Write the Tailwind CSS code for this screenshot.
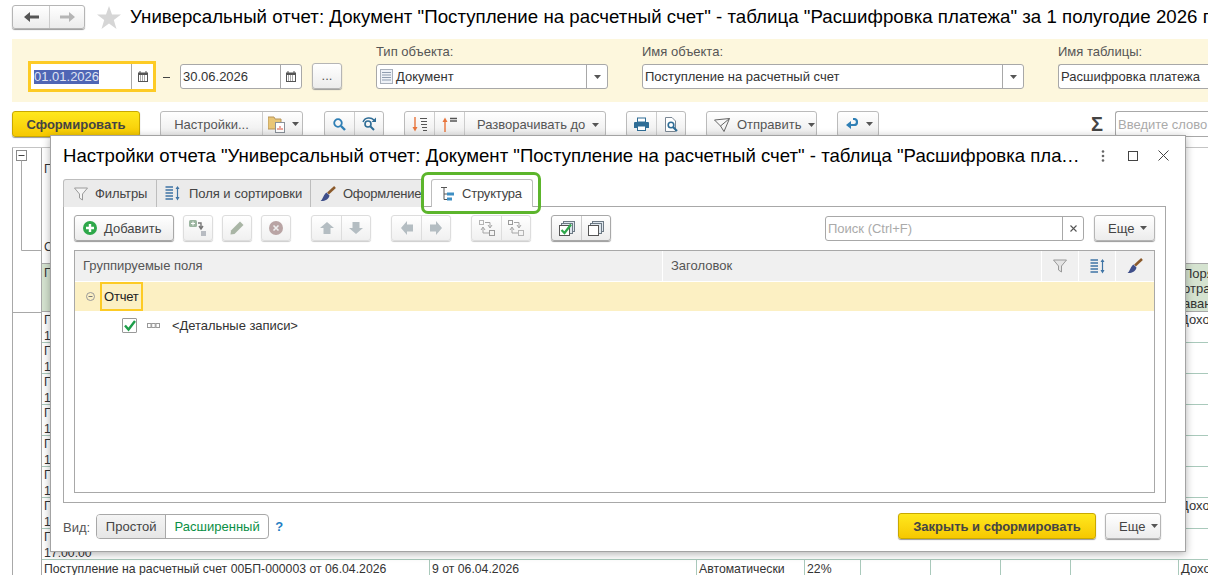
<!DOCTYPE html>
<html lang="ru">
<head>
<meta charset="UTF-8">
<title>Универсальный отчет</title>
<script src="https://cdn.jsdelivr.net/npm/@tailwindcss/browser@4"></script>
</head>
<body class="bg-white">
<div class="relative w-[1208px] h-[575px] overflow-hidden bg-white font-['Liberation_Sans',Arial,sans-serif] text-[13px] text-[#333]">

  <!-- Заголовок -->
  <div class="flex items-center h-[39px] pl-3 pb-[5px]">
    <div class="flex w-[73px] h-[24px] shrink-0 rounded-[3px] border border-[#b5b5b5] bg-linear-to-b from-white to-[#ececec] shadow-[0_1px_1px_#999]">
      <div class="w-[37px] flex items-center justify-center border-r border-[#ccc]">
        <svg width="15" height="10" viewBox="0 0 15 10"><path d="M0 5 L6 0 V3.500 H15 V6.500 H6 V10 Z" fill="#555"/></svg>
      </div>
      <div class="flex-1 flex items-center justify-center">
        <svg width="15" height="10" viewBox="0 0 15 10"><path d="M15 5 L9 0 V3.500 H0 V6.500 H9 V10 Z" fill="#b5b5b5"/></svg>
      </div>
    </div>
    <svg class="ml-[12px] shrink-0" width="24" height="23" viewBox="0 0 24 23"><path d="M12 0 L15 8.500 H24 L16.800 14 L19.500 23 L12 17.500 L4.500 23 L7.200 14 L0 8.500 H9 Z" fill="#d6d6d6"/></svg>
    <div class="ml-[9px] whitespace-nowrap text-[18.67px] tracking-[0.03px] text-black">Универсальный отчет: Документ "Поступление на расчетный счет" - таблица "Расшифровка платежа" за 1 полугодие 2026 г.</div>
  </div>

  <!-- Параметры отчета -->
  <div class="ml-3 h-[63px] bg-[#fdf7dd] flex items-end pb-[10px] pl-4">
    <div class="w-[128px] h-[31px] border-[3px] border-[#fdcb25] bg-white flex items-center shrink-0">
      <div class="flex-1 pl-[3px] h-[25px] flex items-center"><span class="bg-[#4f66b5] text-[#dfe3f2] leading-[14px]">01.01.2026</span></div>
      <div class="w-[22px] h-[25px] border-l border-[#a8a8a8] flex items-center justify-center">
        <svg width="10" height="11" viewBox="0 0 10 11"><path d="M2 0 V2 M8 0 V2" stroke="#555"/><rect y="1.500" width="10" height="9.500" fill="#555"/><rect x="1" y="4" width="8" height="6" fill="#fff"/><path d="M2 5 H8 M2 7 H8 M2 9 H8" stroke="#555" stroke-dasharray="1 1"/></svg>
      </div>
    </div>
    <div class="ml-[7px] mb-[14px] w-[7px] h-px bg-[#444] shrink-0"></div>
    <div class="ml-[10px] mb-[3px] w-[122px] h-[25px] rounded-[3px] border border-[#a8a8a8] bg-white flex items-center shrink-0">
      <div class="flex-1 pl-[2px]">30.06.2026</div>
      <div class="w-[21px] h-full border-l border-[#a8a8a8] flex items-center justify-center">
        <svg width="10" height="11" viewBox="0 0 10 11"><path d="M2 0 V2 M8 0 V2" stroke="#555"/><rect y="1.500" width="10" height="9.500" fill="#555"/><rect x="1" y="4" width="8" height="6" fill="#fff"/><path d="M2 5 H8 M2 7 H8 M2 9 H8" stroke="#555" stroke-dasharray="1 1"/></svg>
      </div>
    </div>
    <div class="ml-[10px] mb-[3px] w-[30px] h-[26px] rounded-[3px] border border-[#b5b5b5] bg-linear-to-b from-white to-[#ececec] shadow-[0_1px_1px_#999] flex items-center justify-center text-[#555] shrink-0">...</div>

    <div class="ml-[34px] mb-[3px] w-[232px] shrink-0">
      <div class="h-4 mb-1 leading-4 text-[#555]">Тип объекта:</div>
      <div class="h-[25px] rounded-[3px] border border-[#a8a8a8] bg-white flex items-center">
        <svg class="ml-[3px]" width="13" height="15" viewBox="0 0 13 15"><rect x=".5" y=".5" width="12" height="14" fill="#eef2f8" stroke="#a9b0bb"/><path d="M2 3.500 H11 M2 6 H11 M2 8.500 H11 M2 11 H11" stroke="#8f9db0"/></svg>
        <div class="flex-1 pl-[3px]">Документ</div>
        <div class="w-[21px] h-full border-l border-[#a8a8a8] flex items-center justify-center">
          <svg width="7" height="4" viewBox="0 0 7 4"><path d="M0 0 H7 L3.500 4 Z" fill="#555"/></svg>
        </div>
      </div>
    </div>

    <div class="ml-[34px] mb-[3px] w-[382px] shrink-0">
      <div class="h-4 mb-1 leading-4 text-[#555]">Имя объекта:</div>
      <div class="h-[25px] rounded-[3px] border border-[#a8a8a8] bg-white flex items-center">
        <div class="flex-1 pl-[2px]">Поступление на расчетный счет</div>
        <div class="w-[21px] h-full border-l border-[#a8a8a8] flex items-center justify-center">
          <svg width="7" height="4" viewBox="0 0 7 4"><path d="M0 0 H7 L3.500 4 Z" fill="#555"/></svg>
        </div>
      </div>
    </div>

    <div class="ml-[34px] mb-[3px] w-[170px] shrink-0">
      <div class="h-4 mb-1 leading-4 text-[#555]">Имя таблицы:</div>
      <div class="h-[25px] rounded-l-[3px] border border-r-0 border-[#a8a8a8] bg-white flex items-center pl-[2px]">Расшифровка платежа</div>
    </div>
  </div>

  <!-- Панель команд -->
  <div class="mt-[9px] h-[26px] ml-3 flex items-start whitespace-nowrap *:shrink-0">
    <div class="w-[128px] h-[26px] pt-px rounded-[3px] border border-[#c9a800] bg-linear-to-b from-[#ffe81c] to-[#f6c800] shadow-[0_1px_1px_#999] flex items-center justify-center font-bold text-[#444]">Сформировать</div>

    <div class="ml-5 w-[143px] h-[26px] rounded-[3px] border border-[#bbb] bg-linear-to-b from-white to-[#ececec] flex">
      <div class="w-[102px] pt-px flex items-center justify-center text-[#555] border-r border-[#ccc]">Настройки...</div>
      <div class="flex-1 flex items-center pl-[5px] gap-[7px]">
        <svg width="17" height="18" viewBox="0 0 17 18"><path d="M0 2 H6 L7 4 H13 V14 H0 Z" fill="#e9c677" stroke="#b8955a"/><rect x="7.500" y="7.500" width="9" height="10" fill="#fff" stroke="#8a9199"/><path d="M10 15 V13 M12 15 V11 M14 15 V13" stroke="#d9503f"/></svg>
        <svg width="7" height="4" viewBox="0 0 7 4"><path d="M0 0 H7 L3.500 4 Z" fill="#555"/></svg>
      </div>
    </div>

    <div class="ml-[21px] w-[60px] h-[26px] rounded-[3px] border border-[#bbb] bg-linear-to-b from-white to-[#ececec] flex">
      <div class="w-[30px] flex items-center justify-center border-r border-[#ccc]">
        <svg width="13" height="13" viewBox="0 0 13 13"><circle cx="5" cy="5" r="3.800" fill="none" stroke="#2f7fb5" stroke-width="1.800"/><path d="M8 8 L12 12" stroke="#2f7fb5" stroke-width="2.400"/></svg>
      </div>
      <div class="flex-1 flex items-center justify-center">
        <svg width="15" height="14" viewBox="0 0 15 14"><circle cx="6" cy="7" r="3" fill="none" stroke="#2f6d96" stroke-width="1.600"/><path d="M8.500 9.500 L12 13" stroke="#2f6d96" stroke-width="2"/><path d="M1 5 C3 0 9 0 12 3" fill="none" stroke="#2f6d96" stroke-width="1.400"/><path d="M14 0.500 V5 H9.500 Z" fill="#2f6d96"/></svg>
      </div>
    </div>

    <div class="ml-5 w-[202px] h-[26px] rounded-[3px] border border-[#bbb] bg-linear-to-b from-white to-[#ececec] flex">
      <div class="w-[30px] flex items-center justify-center border-r border-[#ccc]">
        <svg width="16" height="15" viewBox="0 0 16 15"><path d="M3 0 V12" stroke="#e8743b" stroke-width="1.400"/><path d="M0.500 10 H5.500 L3 14.500 Z" fill="#e8743b"/><path d="M8 1.500 H15 M9 4.500 H15 M9 7.500 H15 M10 10.500 H15 M11 13.500 H15" stroke="#555" stroke-width="1.200"/></svg>
      </div>
      <div class="w-[30px] flex items-center justify-center border-r border-[#ccc]">
        <svg width="16" height="15" viewBox="0 0 16 15"><path d="M3 15 V3" stroke="#e8743b" stroke-width="1.400"/><path d="M0.500 5 H5.500 L3 0.500 Z" fill="#e8743b"/><path d="M8 1.500 H15 M8 4 H15" stroke="#555" stroke-width="1.400"/></svg>
      </div>
      <div class="flex-1 pt-px flex items-center pl-3 gap-[7px] text-[#555]">Разворачивать до
        <svg width="7" height="4" viewBox="0 0 7 4"><path d="M0 0 H7 L3.500 4 Z" fill="#555"/></svg>
      </div>
    </div>

    <div class="ml-5 w-[60px] h-[26px] rounded-[3px] border border-[#bbb] bg-linear-to-b from-white to-[#ececec] flex">
      <div class="w-[30px] flex items-center justify-center border-r border-[#ccc]">
        <svg width="15" height="14" viewBox="0 0 15 14"><rect x="3.500" y="1" width="8" height="4" fill="#fff" stroke="#2f6d96"/><path d="M1 5 H14 Q15 5 15 6 V11 H0 V6 Q0 5 1 5 Z" fill="#2f6d96"/><rect x="3.500" y="9" width="8" height="4.500" fill="#fff" stroke="#2f6d96"/></svg>
      </div>
      <div class="flex-1 flex items-center justify-center">
        <svg width="14" height="15" viewBox="0 0 14 15"><path d="M1.500 .5 H8 L11.500 4 V14.500 H1.500 Z" fill="#fff" stroke="#7a8794"/><circle cx="7" cy="8" r="2.800" fill="none" stroke="#2f6d96" stroke-width="1.600"/><path d="M9 10 L13 14" stroke="#2f6d96" stroke-width="2.200"/></svg>
      </div>
    </div>

    <div class="ml-5 w-[111px] h-[26px] pt-px rounded-[3px] border border-[#bbb] bg-linear-to-b from-white to-[#ececec] flex items-center pl-[7px] gap-[7px] text-[#555]">
      <svg width="16" height="14" viewBox="0 0 16 14"><path d="M.5 2 L15.500 .5 L10 13.500 L6.500 8 Z M6.500 8 L15.500 .5" fill="none" stroke="#666" stroke-width="1"/></svg>
      Отправить
      <svg width="7" height="4" viewBox="0 0 7 4"><path d="M0 0 H7 L3.500 4 Z" fill="#555"/></svg>
    </div>

    <div class="ml-5 w-[42px] h-[26px] rounded-[3px] border border-[#bbb] bg-linear-to-b from-white to-[#ececec] flex items-center pl-[8px] gap-[8px]">
      <svg width="12" height="12" viewBox="0 0 12 12"><path d="M7 1 H8 Q11 1 11 4 Q11 7 8 7 H3" fill="none" stroke="#2f7fb5" stroke-width="2.200"/><path d="M5 3 V11 L0 7 Z" fill="#2f7fb5"/></svg>
      <svg width="7" height="4" viewBox="0 0 7 4"><path d="M0 0 H7 L3.500 4 Z" fill="#555"/></svg>
    </div>

    <div class="ml-[211px] w-[14px] h-[26px] flex items-center justify-center text-[20px] font-bold text-[#444] leading-none">Σ</div>
    <div class="ml-[11px] w-[93px] h-[26px] pt-px rounded-l-[3px] border border-r-0 border-[#a8a8a8] bg-white flex items-center pl-[2px] text-[#aaa] overflow-hidden">Введите слово</div>
  </div>

  <!-- Отчет под окном настроек -->
  <div class="mt-[10px] ml-3 flex border-t border-[#c4c4c4] text-[12.25px]">
    <div class="w-[30px] shrink-0 h-[428px] border-x border-[#a8a8a8]">
      <div class="h-[165px] border-b border-[#a8a8a8]">
        <svg width="28" height="164" viewBox="0 0 28 164"><rect x="3.500" y="2.500" width="10" height="10" fill="#fff" stroke="#8a8a8a"/><path d="M5.500 7.500 H11.500" stroke="#444"/><path d="M8.500 12.500 V102.500 H28" fill="none" stroke="#a8a8a8"/></svg>
      </div>
    </div>
    <div class="w-[1170px] shrink-0 text-[#333]">
      <div class="h-[115px] pl-[2px] pt-3">
        <div>Параметры:</div>
        <div class="mt-[60px]">Сортировка:</div>
      </div>
      <div class="h-[49px] bg-[#d5e3d0] border-y border-[#a8a8a8] flex leading-[15px] pt-[2px] pl-[2px] overflow-hidden">
        <div class="w-[1139px] shrink-0">Поступление</div>
        <div class="text-[13px] whitespace-nowrap">Порядок<br>отражения<br>аванса</div>
      </div>
      <div class="h-[31px] border-b border-[#a9c9bb] flex leading-[16px] pl-[2px] overflow-hidden"><div class="w-[1136px] shrink-0">Поступление на расчетный счет<br>17:00:00</div><div class="text-[13px]">Доходы</div></div>
      <div class="h-[31px] border-b border-[#a9c9bb] leading-[16px] pl-[2px] overflow-hidden">Поступление на расчетный счет<br>17:00:00</div>
      <div class="h-[31px] border-b border-[#a9c9bb] leading-[16px] pl-[2px] overflow-hidden">Поступление на расчетный счет<br>17:00:00</div>
      <div class="h-[31px] border-b border-[#a9c9bb] leading-[16px] pl-[2px] overflow-hidden">Поступление на расчетный счет<br>17:00:00</div>
      <div class="h-[31px] border-b border-[#a9c9bb] leading-[16px] pl-[2px] overflow-hidden">Поступление на расчетный счет<br>17:00:00</div>
      <div class="h-[31px] border-b border-[#a9c9bb] leading-[16px] pl-[2px] overflow-hidden">Поступление на расчетный счет<br>17:00:00</div>
      <div class="h-[31px] border-b border-[#a9c9bb] flex leading-[16px] pl-[2px] overflow-hidden"><div class="w-[1136px] shrink-0">Поступление на расчетный счет<br>17:00:00</div><div class="text-[13px]">Доходы</div></div>
      <div class="h-[31px] border-b border-[#a9c9bb] leading-[16px] pl-[2px] overflow-hidden">Поступление на расчетный счет<br>17:00:00</div>
      <div class="grid grid-cols-[388px_267px_108px_56px_70px_70px_70px_108px_33px] h-[16px] leading-[18px]">
        <div class="pl-[2px] border-r border-[#a9c9bb] whitespace-nowrap">Поступление на расчетный счет 00БП-000003 от 06.04.2026</div>
        <div class="pl-[2px] border-r border-[#a9c9bb]">9 от 06.04.2026</div>
        <div class="pl-[2px] border-r border-[#a9c9bb]">Автоматически</div>
        <div class="pl-[2px] border-r border-[#a9c9bb]">22%</div>
        <div class="border-r border-[#a9c9bb]"></div>
        <div class="border-r border-[#a9c9bb]"></div>
        <div class="border-r border-[#a9c9bb]"></div>
        <div class="border-r border-[#a9c9bb]"></div>
        <div class="pl-[2px] whitespace-nowrap text-[13px]">Доходы</div>
      </div>
    </div>
  </div>

  <!-- Окно настроек -->
  <div class="absolute left-[50px] top-[135px] w-[1136px] h-[417px] bg-white border border-[#a3a3a3] shadow-[0_2px_8px_rgba(0,0,0,0.3)] pl-3 pr-[19px]">
    <div class="h-[43px] flex items-center pb-[4px] -mr-[19px]">
      <div class="w-[1017px] truncate text-[18.6px] text-black">Настройки отчета "Универсальный отчет: Документ "Поступление на расчетный счет" - таблица "Расшифровка платежа" за 1 полугодие 2026 г."</div>
      <svg class="ml-[21px]" width="4" height="12" viewBox="0 0 4 12"><circle cx="2" cy="1.500" r="1.300" fill="#666"/><circle cx="2" cy="6" r="1.300" fill="#666"/><circle cx="2" cy="10.500" r="1.300" fill="#666"/></svg>
      <svg class="ml-[23px]" width="10" height="10" viewBox="0 0 10 10"><rect x=".5" y=".5" width="9" height="9" fill="none" stroke="#444"/></svg>
      <svg class="ml-[20px]" width="11" height="11" viewBox="0 0 11 11"><path d="M.5 .5 L10.500 10.500 M10.500 .5 L.5 10.500" stroke="#444"/></svg>
    </div>

    <div class="relative z-10 flex h-[28px] -mb-px whitespace-nowrap">
      <div class="w-[94px] bg-[#ebebeb] border border-b-0 border-[#bdbdbd] rounded-tl-[3px] flex items-center pl-[10px] gap-[7px] text-[#444] tracking-[-0.1px]">
        <svg width="14" height="14" viewBox="0 0 14 14"><path d="M.5 1 H13.500 L8.500 7 V13 L5.500 11 V7 Z" fill="#f4f4f4" stroke="#9a9a9a"/></svg>
        Фильтры
      </div>
      <div class="w-[154px] bg-[#ebebeb] border border-l-0 border-b-0 border-[#bdbdbd] flex items-center pl-[8px] gap-[9px] text-[#444] tracking-[-0.03px]">
        <svg width="15" height="15" viewBox="0 0 15 15"><path d="M.5 1 H8 M.5 4 H8 M.5 7 H8 M.5 10 H8 M.5 13 H8" stroke="#3f74a5" stroke-width="1.500"/><path d="M12.500 1 V13" stroke="#3f74a5" stroke-width="1.200"/><path d="M10.500 3 L12.500 0 L14.500 3 Z M10.500 11 L12.500 14.500 L14.500 11 Z" fill="#3f74a5"/></svg>
        Поля и сортировки
      </div>
      <div class="w-[110px] mr-[10px] bg-[#ebebeb] border-t border-[#bdbdbd] flex items-center pl-[9px] gap-[7px] text-[#444] tracking-[-0.25px] overflow-hidden">
        <svg class="shrink-0" width="16" height="16" viewBox="0 0 16 16"><path d="M15 1 L8 7.500" stroke="#8b5a2b" stroke-width="2.600"/><path d="M6.500 6.500 L9.500 9.500 C8.500 14 4 15.500 .5 15 C3 13.500 3 9 6.500 6.500 Z" fill="#3f4f8a"/></svg>
        Оформление
      </div>
      <div class="w-[102px] bg-white border border-b-0 border-[#bdbdbd] rounded-t-[3px] flex items-center pl-[9px] gap-[8px] text-[#444] tracking-[-0.2px]">
        <svg width="13" height="14" viewBox="0 0 13 14"><path d="M0 .5 H6 M3 1 V12.500 H6 M3 7 H6" fill="none" stroke="#555"/><rect x="6" y="5.500" width="7" height="3" fill="#3f8fc4"/><rect x="6" y="10.500" width="5" height="3" fill="#3f8fc4"/></svg>
        Структура
      </div>
    </div>
    <div class="absolute z-20 left-[370px] top-[36px] w-[120px] h-[42px] rounded-[7px] border-[3px] border-[#5cb52c]"></div>

    <div class="h-[297px] border border-[#a8a8a8] px-[10px] pt-2">
      <div class="flex h-[26px] items-start">
        <div class="w-[100px] h-[26px] rounded-[3px] border border-[#a8a8a8] bg-linear-to-b from-white to-[#ececec] shadow-[0_1px_1px_#999] flex items-center pl-2 gap-[7px] text-[#444]">
          <svg width="14" height="14" viewBox="0 0 14 14"><circle cx="7" cy="7" r="7" fill="#2ea84a"/><path d="M3 7 H11 M7 3 V11" stroke="#fff" stroke-width="2.400"/></svg>
          <span class="pt-px">Добавить</span>
        </div>
        <div class="ml-[9px] w-[30px] h-[26px] rounded-[3px] border border-[#ddd] bg-linear-to-b from-white to-[#f0f0f0] shadow-[0_1px_1px_#ccc] flex items-center justify-center">
          <svg width="18" height="17" viewBox="0 0 18 17"><rect x="0" y="0" width="8" height="7" rx="1.500" fill="#9bb5a0"/><path d="M2 3.500 H6 M4 1.500 V5.500" stroke="#fff"/><path d="M9 3 H12 V8 M10 6 L12 9 L14 6" fill="none" stroke="#777" stroke-width="1.400"/><rect x="12" y="11" width="5" height="5" fill="#b8bcc2"/></svg>
        </div>
        <div class="ml-[9px] w-[30px] h-[26px] rounded-[3px] border border-[#ddd] bg-linear-to-b from-white to-[#f0f0f0] shadow-[0_1px_1px_#ccc] flex items-center justify-center">
          <svg width="14" height="14" viewBox="0 0 14 14"><path d="M10 .5 L13.500 4 L4.500 13 L.5 13.500 L1 9.500 Z" fill="#a9b5a5"/></svg>
        </div>
        <div class="ml-[9px] w-[30px] h-[26px] rounded-[3px] border border-[#ddd] bg-linear-to-b from-white to-[#f0f0f0] shadow-[0_1px_1px_#ccc] flex items-center justify-center">
          <svg width="14" height="14" viewBox="0 0 14 14"><circle cx="7" cy="7" r="7" fill="#b9a4a4"/><path d="M4.500 4.500 L9.500 9.500 M9.500 4.500 L4.500 9.500" stroke="#eee" stroke-width="1.600"/></svg>
        </div>
        <div class="ml-5 w-[60px] h-[26px] rounded-[3px] border border-[#ddd] bg-linear-to-b from-white to-[#f0f0f0] shadow-[0_1px_1px_#ccc] flex">
          <div class="w-[30px] border-r border-[#ddd] flex items-center justify-center"><svg width="14" height="12" viewBox="0 0 14 12"><path d="M7 0 L14 6 H10.500 V12 H3.500 V6 H0 Z" fill="#b4bdc2"/></svg></div>
          <div class="flex-1 flex items-center justify-center"><svg width="14" height="12" viewBox="0 0 14 12"><path d="M7 12 L14 6 H10.500 V0 H3.500 V6 H0 Z" fill="#b4bdc2"/></svg></div>
        </div>
        <div class="ml-5 w-[60px] h-[26px] rounded-[3px] border border-[#ddd] bg-linear-to-b from-white to-[#f0f0f0] shadow-[0_1px_1px_#ccc] flex">
          <div class="w-[30px] border-r border-[#ddd] flex items-center justify-center"><svg width="12" height="14" viewBox="0 0 12 14"><path d="M0 7 L6 0 V3.500 H12 V10.500 H6 V14 Z" fill="#b4bdc2"/></svg></div>
          <div class="flex-1 flex items-center justify-center"><svg width="12" height="14" viewBox="0 0 12 14"><path d="M12 7 L6 0 V3.500 H0 V10.500 H6 V14 Z" fill="#b4bdc2"/></svg></div>
        </div>
        <div class="ml-5 w-[60px] h-[26px] rounded-[3px] border border-[#ddd] bg-linear-to-b from-white to-[#f0f0f0] shadow-[0_1px_1px_#ccc] flex">
          <div class="w-[30px] border-r border-[#ddd] flex items-center justify-center"><svg width="16" height="16" viewBox="0 0 16 16"><rect x=".5" y=".5" width="4" height="4" fill="none" stroke="#b5b5b5"/><rect x="10.500" y="10.500" width="5" height="5" fill="none" stroke="#9a9a9a"/><path d="M6 2.500 H11 V7 M9 5 L11 8 L13 5 M10 13 H4 V8 M2 10 L4 7 L6 10" fill="none" stroke="#a5a5a5"/></svg></div>
          <div class="flex-1 flex items-center justify-center"><svg width="16" height="16" viewBox="0 0 16 16"><rect x=".5" y=".5" width="4" height="4" fill="none" stroke="#9a9a9a"/><rect x="10.500" y="10.500" width="5" height="5" fill="none" stroke="#b5b5b5"/><path d="M6 2.500 H11 V7 M9 5 L11 8 L13 5 M10 13 H4 V8 M2 10 L4 7 L6 10" fill="none" stroke="#a5a5a5"/></svg></div>
        </div>
        <div class="ml-5 w-[60px] h-[26px] rounded-[3px] border border-[#a8a8a8] bg-linear-to-b from-white to-[#ececec] shadow-[0_1px_1px_#999] flex">
          <div class="w-[30px] border-r border-[#ccc] flex items-center justify-center"><svg width="16" height="15" viewBox="0 0 16 15"><rect x="4.500" y=".5" width="11" height="10" fill="#dfe7ee" stroke="#6d7a85"/><rect x="2.500" y="2.500" width="11" height="10" fill="#dfe7ee" stroke="#6d7a85"/><rect x=".5" y="4.500" width="10" height="10" fill="#fff" stroke="#555"/><path d="M2.500 9 L5.500 12 L12 3.500" fill="none" stroke="#2ea84a" stroke-width="2.200"/></svg></div>
          <div class="flex-1 flex items-center justify-center"><svg width="16" height="15" viewBox="0 0 16 15"><rect x="4.500" y=".5" width="11" height="10" fill="#dfe7ee" stroke="#6d7a85"/><rect x="2.500" y="2.500" width="11" height="10" fill="#dfe7ee" stroke="#6d7a85"/><rect x=".5" y="4.500" width="10" height="10" fill="#fff" stroke="#555"/></svg></div>
        </div>

        <div class="ml-auto mt-px w-[259px] h-[25px] rounded-[3px] border border-[#a8a8a8] flex items-center">
          <div class="flex-1 pl-[2px] text-[#aaa]">Поиск (Ctrl+F)</div>
          <div class="w-[21px] h-full border-l border-[#a8a8a8] flex items-center justify-center">
            <svg width="7" height="7" viewBox="0 0 7 7"><path d="M.5 .5 L6.500 6.500 M6.500 .5 L.5 6.500" stroke="#555" stroke-width="1.100"/></svg>
          </div>
        </div>
        <div class="ml-[10px] w-[61px] h-[26px] rounded-[3px] border border-[#b5b5b5] bg-linear-to-b from-white to-[#ececec] shadow-[0_1px_1px_#999] flex items-center pl-[13px] gap-[6px] text-[#444]">
          <span class="pt-px">Еще</span>
          <svg width="7" height="4" viewBox="0 0 7 4"><path d="M0 0 H7 L3.500 4 Z" fill="#555"/></svg>
        </div>
      </div>

      <div class="mt-[9px] h-[243px] border border-[#a8a8a8]">
        <div class="flex h-[31px] bg-[#f0f0f0] border-b border-white">
          <div class="w-[588px] flex items-center pl-2 text-[#555] border-r border-white">Группируемые поля</div>
          <div class="w-[379px] flex items-center pl-2 text-[#555] border-r border-white">Заголовок</div>
          <div class="w-[37px] flex items-center justify-center border-r border-white">
            <svg width="14" height="14" viewBox="0 0 14 14"><path d="M.5 1 H13.500 L8.500 7 V13 L5.500 11 V7 Z" fill="#e4e4e4" stroke="#999"/></svg>
          </div>
          <div class="w-[37px] flex items-center justify-center border-r border-white">
            <svg width="15" height="15" viewBox="0 0 15 15"><path d="M.5 1 H8 M.5 4 H8 M.5 7 H8 M.5 10 H8 M.5 13 H8" stroke="#3f74a5" stroke-width="1.500"/><path d="M12.500 1 V13" stroke="#3f74a5" stroke-width="1.200"/><path d="M10.500 3 L12.500 0 L14.500 3 Z M10.500 11 L12.500 14.500 L14.500 11 Z" fill="#3f74a5"/></svg>
          </div>
          <div class="flex-1 flex items-center justify-center">
            <svg width="16" height="16" viewBox="0 0 16 16"><path d="M15 1 L8 7.500" stroke="#8b5a2b" stroke-width="2.600"/><path d="M6.500 6.500 L9.500 9.500 C8.500 14 4 15.500 .5 15 C3 13.500 3 9 6.500 6.500 Z" fill="#3f4f8a"/></svg>
          </div>
        </div>
        <div class="h-[29px] bg-[#fcf0c3] flex items-center pl-[11px]">
          <svg width="9" height="9" viewBox="0 0 9 9"><circle cx="4.500" cy="4.500" r="4" fill="none" stroke="#999"/><path d="M2.500 4.500 H6.500" stroke="#777"/></svg>
          <div class="ml-[5px] w-[43px] h-[29px] border-2 border-[#fdcb25] flex items-center pl-[2px] text-[#222] tracking-[-0.2px]">Отчет</div>
        </div>
        <div class="h-[29px] flex items-center pl-[47px]">
          <div class="w-[15px] h-[15px] border border-[#999] rounded-[1px] flex items-center justify-center">
            <svg width="13" height="12" viewBox="0 0 13 12"><path d="M2 5.500 L5.500 9.500 L12 1" fill="none" stroke="#1e9e4a" stroke-width="2.400"/></svg>
          </div>
          <svg class="ml-[10px]" width="13" height="5" viewBox="0 0 13 5"><rect x=".5" y=".5" width="3.500" height="4" fill="none" stroke="#999"/><rect x="4.700" y=".5" width="3.500" height="4" fill="none" stroke="#999"/><rect x="9" y=".5" width="3.500" height="4" fill="none" stroke="#999"/></svg>
          <div class="ml-3 text-[#333] tracking-[-0.05px]">&lt;Детальные записи&gt;</div>
        </div>
      </div>
    </div>

    <div class="mt-[10px] h-[26px] flex items-center pr-[5px]">
      <div class="pt-[3px] text-[#555]">Вид:</div>
      <div class="ml-[6px] mt-px w-[173px] h-[25px] rounded-[4px] border border-[#a8a8a8] flex overflow-hidden">
        <div class="w-[69px] border-r border-[#a8a8a8] bg-linear-to-b from-[#f4f4f4] to-[#e6e6e6] flex items-center justify-center text-[#444]">Простой</div>
        <div class="flex-1 flex items-center justify-center text-[#0a8f45]">Расширенный</div>
      </div>
      <div class="ml-[6px] pt-[2px] font-bold text-[#1f7fc4]">?</div>
      <div class="ml-auto w-[198px] h-[26px] pt-px rounded-[3px] border border-[#c9a800] bg-linear-to-b from-[#ffe81c] to-[#f6c800] shadow-[0_1px_1px_#999] flex items-center justify-center font-bold text-[#444]">Закрыть и сформировать</div>
      <div class="ml-[9px] w-[56px] h-[26px] rounded-[3px] border border-[#b5b5b5] bg-linear-to-b from-white to-[#ececec] shadow-[0_1px_1px_#999] flex items-center pl-[13px] gap-[6px] text-[#444]">
        <span class="pt-px">Еще</span>
        <svg width="7" height="4" viewBox="0 0 7 4"><path d="M0 0 H7 L3.500 4 Z" fill="#555"/></svg>
      </div>
    </div>
  </div>

</div>
</body>
</html>
